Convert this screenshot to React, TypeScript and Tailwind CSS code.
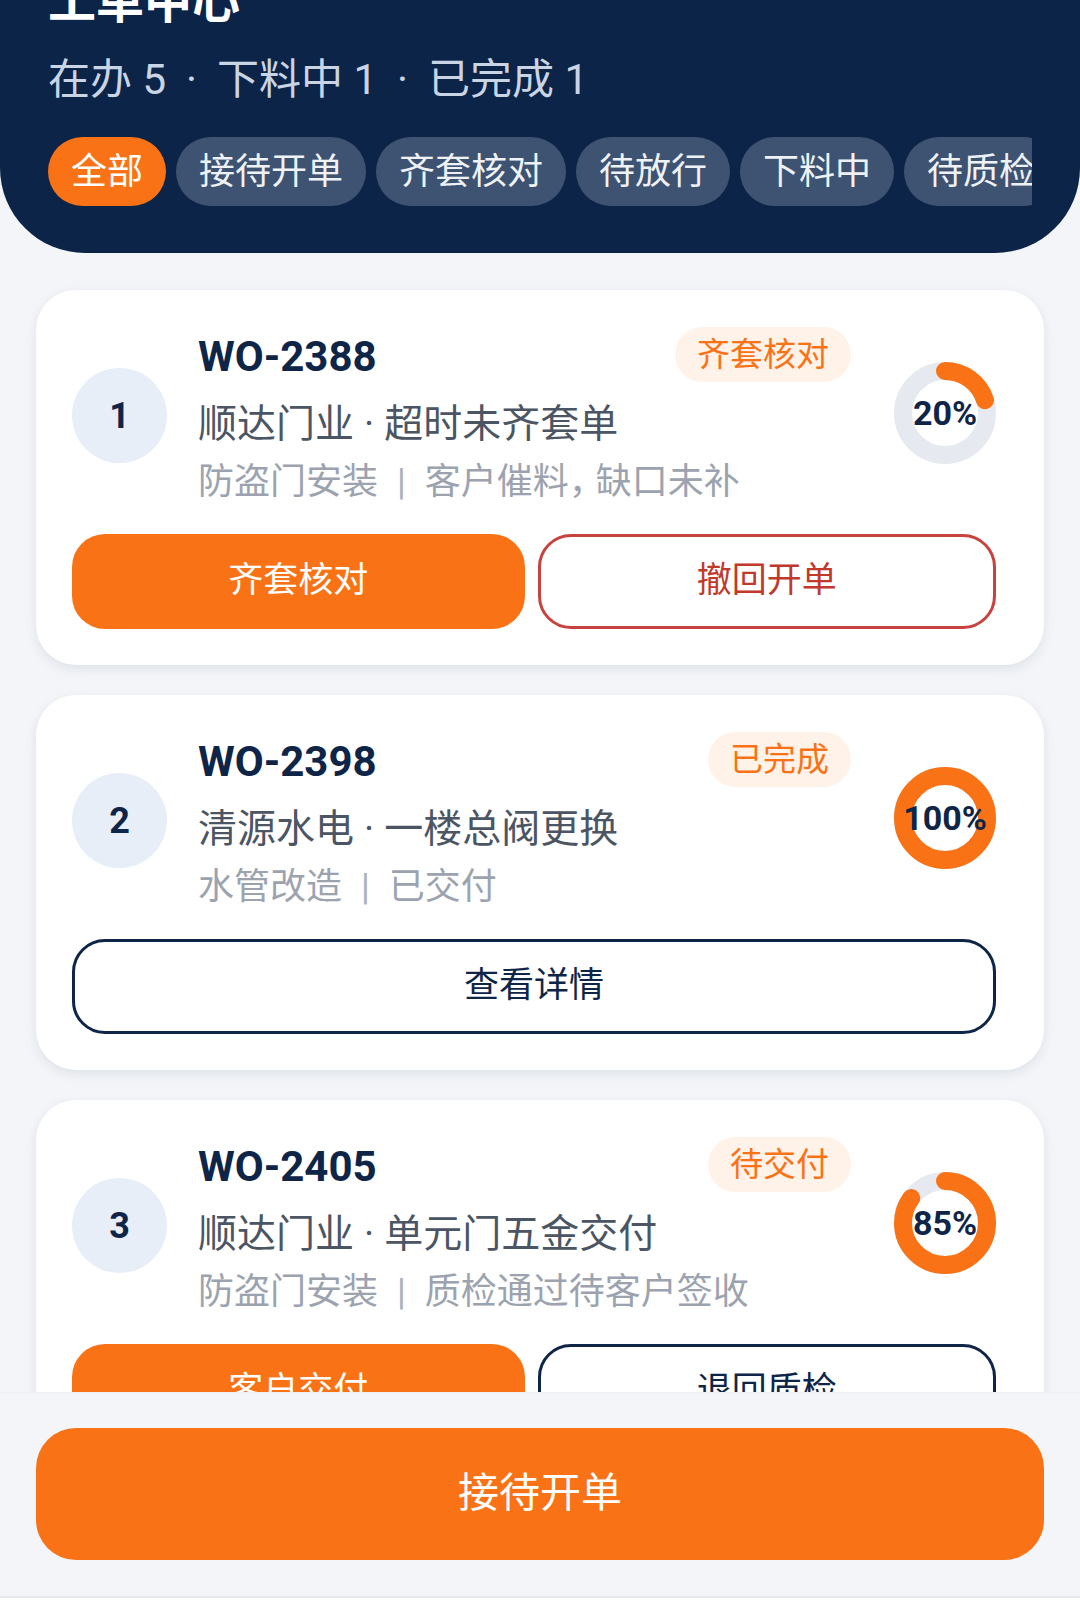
import React from 'react';

const FONT = { fontFamily: 'Roboto, "Noto Sans CJK SC", "Noto Sans", sans-serif' };

const TABS = ['全部', '接待开单', '齐套核对', '待放行', '下料中', '待质检', '待交付', '已完成'];

type Action = { label: string; kind: 'primary' | 'danger' | 'outline' };

type Order = {
  no: number;
  code: string;
  status: string;
  client: string;
  title: string;
  category: string;
  note: string;
  progress: number;
  actions: Action[];
};

const ORDERS: Order[] = [
  {
    no: 1,
    code: 'WO-2388',
    status: '齐套核对',
    client: '顺达门业',
    title: '超时未齐套单',
    category: '防盗门安装',
    note: '客户催料，缺口未补',
    progress: 20,
    actions: [
      { label: '齐套核对', kind: 'primary' },
      { label: '撤回开单', kind: 'danger' },
    ],
  },
  {
    no: 2,
    code: 'WO-2398',
    status: '已完成',
    client: '清源水电',
    title: '一楼总阀更换',
    category: '水管改造',
    note: '已交付',
    progress: 100,
    actions: [{ label: '查看详情', kind: 'outline' }],
  },
  {
    no: 3,
    code: 'WO-2405',
    status: '待交付',
    client: '顺达门业',
    title: '单元门五金交付',
    category: '防盗门安装',
    note: '质检通过待客户签收',
    progress: 85,
    actions: [
      { label: '客户交付', kind: 'primary' },
      { label: '退回质检', kind: 'outline' },
    ],
  },
];

function Ring({ pct }: { pct: number }) {
  const r = 42;
  const c = 2 * Math.PI * r;
  return (
    <div className="relative w-[102px] h-[102px] shrink-0">
      <svg viewBox="0 0 102 102" className="w-full h-full -rotate-90">
        <circle cx="51" cy="51" r={r} fill="none" stroke="#e6eaf0" strokeWidth="18" />
        <circle
          cx="51"
          cy="51"
          r={r}
          fill="none"
          stroke="#f97316"
          strokeWidth="18"
          strokeDasharray={`${(c * pct) / 100} ${c}`}
          strokeLinecap={pct >= 100 ? 'butt' : 'round'}
        />
      </svg>
      <span className="absolute inset-0 flex items-center justify-center text-[34px] font-bold text-[#0f2548] leading-none">
        {pct}%
      </span>
    </div>
  );
}

function ActionButton({ action }: { action: Action }) {
  const cls =
    action.kind === 'primary'
      ? 'bg-[#f97316] text-white'
      : action.kind === 'danger'
        ? 'bg-white border-[3px] border-[#c8423f] text-[#c0392b]'
        : 'bg-white border-[3px] border-[#0f2548] text-[#0f2548]';
  return (
    <button className={`flex-1 h-[95px] rounded-[33px] text-[35px] flex items-center justify-center ${cls}`}>
      {action.label}
    </button>
  );
}

function Note({ text }: { text: string }) {
  // the comma in the note is drawn tighter than a full-width one
  const parts = text.split('，');
  return (
    <>
      {parts.map((p, i) => (
        <React.Fragment key={i}>
          {i > 0 && <span className="tracking-[-9px]">，</span>}
          {p}
        </React.Fragment>
      ))}
    </>
  );
}

function OrderCard({ order }: { order: Order }) {
  return (
    <div className="bg-white rounded-[40px] pt-[37px] pb-[36px] pl-[36px] pr-[48px] shadow-[0_4px_12px_rgba(15,35,70,0.09)] shrink-0">
      <div className="flex items-center">
        <div className="mb-[4px] w-[95px] h-[95px] rounded-full bg-[#e8eef7] flex items-center justify-center text-[36px] font-bold text-[#0f2548] shrink-0">
          {order.no}
        </div>
        <div className="ml-[31px] flex-1 min-w-0">
          <div className="flex items-center justify-between">
            <span className="pt-[4px] text-[42px] font-bold text-[#0f2548] leading-none">{order.code}</span>
            <span className="h-[55px] px-[22px] rounded-full bg-[#fff2e8] text-[#f97316] text-[33px] flex items-center">
              {order.status}
            </span>
          </div>
          <div className="mt-[14px] text-[39px] leading-[57px] text-[#4b5563] whitespace-nowrap">
            {order.client}
            <span className="mx-[10px]">·</span>
            {order.title}
          </div>
          <div className="mt-[3px] text-[36px] leading-[52px] text-[#9ca3af] whitespace-nowrap">
            {order.category}
            <span className="mx-[19px] text-[#aab1bc]">|</span>
            <Note text={order.note} />
          </div>
        </div>
        <div className="ml-[43px] mb-[9px]">
          <Ring pct={order.progress} />
        </div>
      </div>
      <div className="mt-[26px] flex gap-[13px]">
        {order.actions.map((a) => (
          <ActionButton key={a.label} action={a} />
        ))}
      </div>
    </div>
  );
}

export default function App() {
  return (
    <div className="w-[1080px] h-[1613px] flex flex-col bg-[#f3f5f8] overflow-hidden" style={FONT}>
      <div className="flex-1 min-h-0 overflow-hidden">
        <header className="bg-[#0c2448] rounded-b-[85px] px-[48px] pb-[47px]">
          <h1 className="-mt-[30px] text-[48px] font-bold leading-[64px] text-white">工单中心</h1>
          <p className="mt-[18px] text-[42px] leading-[56px] text-[#c9d4e4]">
            在办 5<span className="mx-[20px]">·</span>下料中 1<span className="mx-[20px]">·</span>已完成 1
          </p>
          <div className="mt-[29px] flex gap-[10px] overflow-hidden">
            {TABS.map((t, i) => (
              <span
                key={t}
                className={`h-[69px] px-[23px] rounded-full flex items-center shrink-0 text-[36px] ${
                  i === 0 ? 'bg-[#f97316] text-white' : 'bg-[#3e5372] text-[#eef2f7]'
                }`}
              >
                {t}
              </span>
            ))}
          </div>
        </header>
        <div className="px-[36px] pt-[37px] flex flex-col gap-[30px]">
          {ORDERS.map((o) => (
            <OrderCard key={o.code} order={o} />
          ))}
        </div>
      </div>
      <div className="h-[221px] shrink-0 flex flex-col bg-[#f3f5f8] border-t border-[#eceff3]">
        <div className="px-[36px] pt-[35px]">
          <button className="w-full h-[132px] rounded-[40px] bg-[#f97316] text-white text-[41px] flex items-center justify-center">
            接待开单
          </button>
        </div>
        <div className="mt-auto h-[17px] bg-white border-t-2 border-[#e5e8ec]" />
      </div>
    </div>
  );
}
